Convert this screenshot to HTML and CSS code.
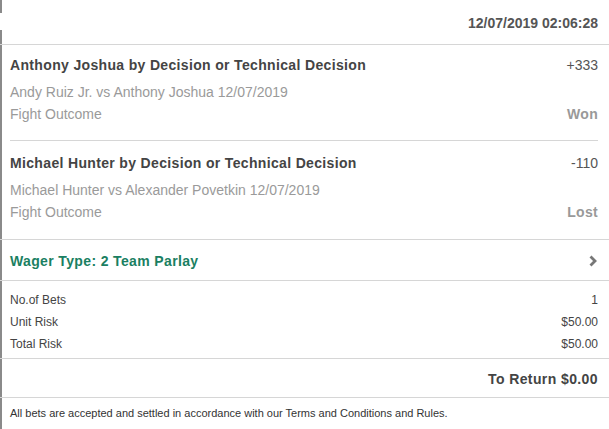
FILE: index.html
```html
<!DOCTYPE html>
<html>
<head>
<meta charset="utf-8">
<link rel="stylesheet" href="styles.css">
</head>
<body>
<div class="slip">
  <div class="header">12/07/2019 02:06:28</div>
  <div class="bets">
    <div class="bet">
      <div class="row title-row"><span class="title">Anthony Joshua by Decision or Technical Decision</span><span class="odds">+333</span></div>
      <div class="row sub">Andy Ruiz Jr. vs Anthony Joshua 12/07/2019</div>
      <div class="row sub"><span>Fight Outcome</span><span class="result">Won</span></div>
    </div>
    <div class="inset-line"></div>
    <div class="bet">
      <div class="row title-row"><span class="title">Michael Hunter by Decision or Technical Decision</span><span class="odds">-110</span></div>
      <div class="row sub">Michael Hunter vs Alexander Povetkin 12/07/2019</div>
      <div class="row sub"><span>Fight Outcome</span><span class="result">Lost</span></div>
    </div>
  </div>
  <div class="wager">
    <span>Wager Type: 2 Team Parlay</span>
    <svg class="chev" width="8" height="12" viewBox="0 0 8 12"><path d="M1.5 1.5 L6 6 L1.5 10.5" fill="none" stroke="#777" stroke-width="2.8"/></svg>
  </div>
  <div class="summary">
    <div class="srow"><span>No.of Bets</span><span>1</span></div>
    <div class="srow"><span>Unit Risk</span><span>$50.00</span></div>
    <div class="srow"><span>Total Risk</span><span>$50.00</span></div>
  </div>
  <div class="return">To Return $0.00</div>
  <div class="footer">All bets are accepted and settled in accordance with our Terms and Conditions and Rules.</div>
</div>
</body>
</html>
```
FILE: styles.css
```css
html, body {
  margin: 0;
  padding: 0;
  background: #fff;
}
body {
  font-family: "Liberation Sans", Arial, sans-serif;
  color: #444;
}
.slip {
  width: 609px;
  height: 429px;
  box-sizing: border-box;
  background: linear-gradient(to bottom, #8a8a8a 0 13px, transparent 13px 30px, #8a8a8a 30px) left top / 2px 100% no-repeat;
}
.header {
  height: 45px;
  box-sizing: border-box;
  display: flex;
  justify-content: flex-end;
  align-items: center;
  padding: 1px 11px 0 10px;
  font-size: 14px;
  font-weight: bold;
  color: #555;
  border-bottom: 1px solid #d6d6d6;
}
.bets {
  border-bottom: 1px solid #d6d6d6;
}
.bet {
  padding: 10px 11px 15px 10px;
}
.bet:last-child {
  padding-top: 12px;
  padding-bottom: 16px;
}
.row {
  display: flex;
  justify-content: space-between;
  align-items: center;
  font-size: 14px;
}
.title-row {
  height: 20px;
  margin-bottom: 6px;
}
.title {
  font-weight: bold;
  color: #444;
  letter-spacing: 0.34px;
}
.odds {
  color: #555;
}
.sub {
  height: 22px;
  color: #9a9a9a;
}
.result {
  font-weight: bold;
  color: #999;
  letter-spacing: 0.3px;
}
.inset-line {
  height: 1px;
  background: #d6d6d6;
  margin: 0 11px 0 10px;
}
.wager {
  height: 41px;
  box-sizing: border-box;
  display: flex;
  justify-content: space-between;
  align-items: center;
  padding: 1px 12px 0 10px;
  font-size: 14px;
  font-weight: bold;
  color: #1a7f62;
  letter-spacing: 0.36px;
  border-bottom: 1px solid #d6d6d6;
}
.summary {
  padding: 8px 11px 3px 10px;
  font-size: 12px;
  color: #444;
  border-bottom: 1px solid #d6d6d6;
}
.srow {
  height: 22px;
  display: flex;
  justify-content: space-between;
  align-items: center;
}
.return {
  height: 39px;
  box-sizing: border-box;
  display: flex;
  justify-content: flex-end;
  align-items: center;
  padding: 1px 11px 0 10px;
  font-size: 14px;
  font-weight: bold;
  color: #444;
  letter-spacing: 0.4px;
  border-bottom: 1px solid #d6d6d6;
}
.footer {
  padding: 7px 11px 0 10px;
  line-height: 16px;
  font-size: 11px;
  color: #333;
}
```
